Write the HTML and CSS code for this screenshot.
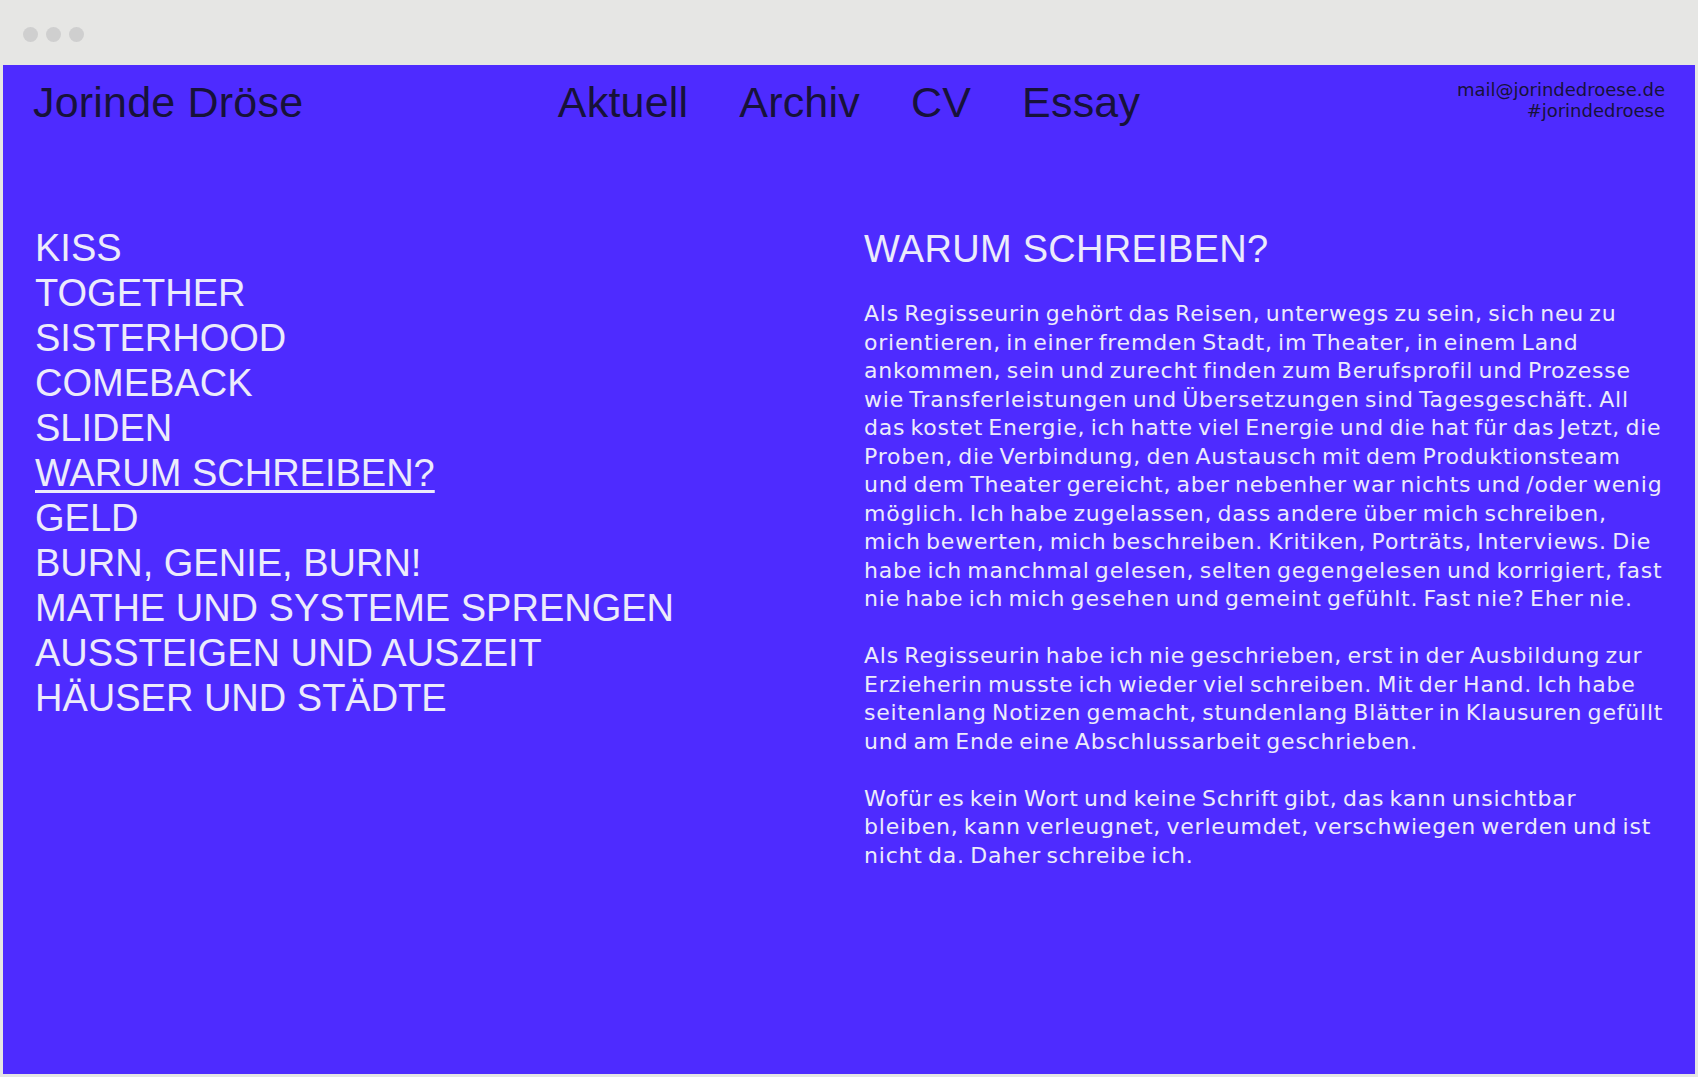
FILE: index.html
```html
<!DOCTYPE html>
<html lang="de">
<head>
<meta charset="utf-8">
<title>Jorinde Dröse – Warum schreiben?</title>
<link rel="stylesheet" href="styles.css">
</head>
<body>
<div class="chrome">
  <span class="dot"></span><span class="dot"></span><span class="dot"></span>
</div>
<div class="site">
  <header class="header">
    <a class="name" href="#">Jorinde Dröse</a>
    <nav class="nav">
      <a href="#">Aktuell</a>
      <a href="#">Archiv</a>
      <a href="#">CV</a>
      <a href="#">Essay</a>
    </nav>
    <div class="contact">
      <a href="#">mail@jorindedroese.de</a>
      <a href="#">#jorindedroese</a>
    </div>
  </header>
  <main class="main">
    <ul class="essays">
      <li><a href="#">KISS</a></li>
      <li><a href="#">TOGETHER</a></li>
      <li><a href="#">SISTERHOOD</a></li>
      <li><a href="#">COMEBACK</a></li>
      <li><a href="#">SLIDEN</a></li>
      <li><a class="active" href="#">WARUM SCHREIBEN?</a></li>
      <li><a href="#">GELD</a></li>
      <li><a href="#">BURN, GENIE, BURN!</a></li>
      <li><a href="#">MATHE UND SYSTEME SPRENGEN</a></li>
      <li><a href="#">AUSSTEIGEN UND AUSZEIT</a></li>
      <li><a href="#">HÄUSER UND STÄDTE</a></li>
    </ul>
    <article class="essay">
      <h1 class="essay-title">WARUM SCHREIBEN?</h1>
      <p>Als Regisseurin gehört das Reisen, unterwegs zu sein, sich neu zu orientieren, in einer fremden Stadt, im Theater, in einem Land ankommen, sein und zurecht finden zum Berufsprofil und Prozesse wie Transferleistungen und Übersetzungen sind Tagesgeschäft. All das kostet Energie, ich hatte viel Energie und die hat für das Jetzt, die Proben, die Verbindung, den Austausch mit dem Produktionsteam und dem Theater gereicht, aber nebenher war nichts und /oder wenig möglich. Ich habe zugelassen, dass andere über mich schreiben, mich bewerten, mich beschreiben. Kritiken, Porträts, Interviews. Die habe ich manchmal gelesen, selten gegengelesen und korrigiert, fast nie habe ich mich gesehen und gemeint gefühlt. Fast nie? Eher nie.</p>
      <p>Als Regisseurin habe ich nie geschrieben, erst in der Ausbildung zur Erzieherin musste ich wieder viel schreiben. Mit der Hand. Ich habe seitenlang Notizen gemacht, stundenlang Blätter in Klausuren gefüllt und am Ende eine Abschlussarbeit geschrieben.</p>
      <p>Wofür es kein Wort und keine Schrift gibt, das kann unsichtbar bleiben, kann verleugnet, verleumdet, verschwiegen werden und ist nicht da. Daher schreibe ich.</p>
    </article>
  </main>
</div>
</body>
</html>
```
FILE: styles.css
```css
* { box-sizing: border-box; }

html, body {
  margin: 0;
  padding: 0;
}

body {
  background: #e6e6e4;
  padding: 0 3px 3px;
  font-family: "Liberation Sans", Arial, sans-serif;
  height: 100vh;
  display: flex;
  flex-direction: column;
}

a { color: inherit; text-decoration: none; }

.chrome {
  height: 65px;
  flex: none;
  display: flex;
  align-items: center;
  gap: 8px;
  padding: 4px 0 0 20px;
}

.dot {
  width: 15px;
  height: 15px;
  border-radius: 50%;
  background: #cfcfcf;
}

.site {
  flex: 1;
  background: #4e2bff;
  color: #ecebfb;
}

.header {
  display: grid;
  grid-template-columns: 1fr auto 1fr;
  align-items: start;
  padding: 16px 30px 0;
  color: #17123a;
}

.name,
.nav a {
  font-size: 43px;
  line-height: 43px;
  letter-spacing: 0.2px;
}

.nav {
  display: flex;
  gap: 51px;
}

.contact {
  justify-self: end;
  display: flex;
  flex-direction: column;
  align-items: flex-end;
  margin-top: -2px;
  font-family: "DejaVu Sans", sans-serif;
  font-size: 18px;
  line-height: 21px;
}

.main {
  display: grid;
  grid-template-columns: 1fr 800px;
  padding: 102px 31px 0 32px;
}

.essays {
  list-style: none;
  margin: 0;
  padding: 0;
  font-size: 38px;
  line-height: 45px;
}

.essays .active {
  text-decoration: underline;
  text-decoration-thickness: 2.5px;
  text-underline-offset: 4px;
}

.essay {
  padding-top: 1px;
}

.essay-title {
  margin: 0 0 28px;
  font-size: 38px;
  line-height: 45px;
  font-weight: normal;
  letter-spacing: 0.3px;
}

.essay p {
  margin: 0 0 28.5px;
  font-family: "DejaVu Sans", sans-serif;
  font-size: 22px;
  line-height: 28.5px;
  letter-spacing: 0.8px;
  word-spacing: -2.5px;
}
```
